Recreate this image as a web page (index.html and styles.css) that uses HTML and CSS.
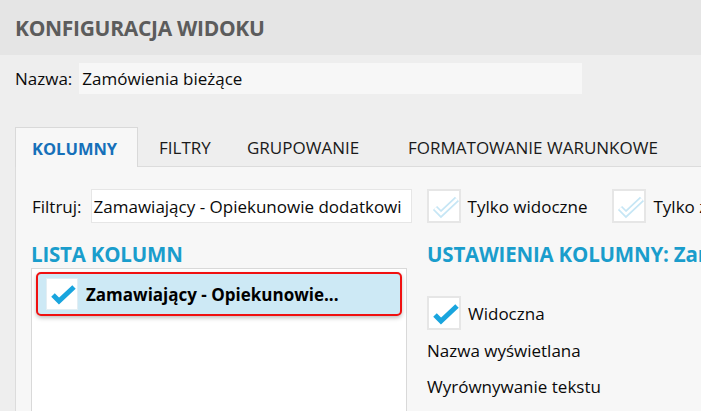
FILE: index.html
```html
<!DOCTYPE html>
<html lang="pl">
<head>
<meta charset="utf-8">
<link rel="stylesheet" href="styles.css">
</head>
<body>
<div class="header"><h1 class="title">KONFIGURACJA WIDOKU</h1></div>
<div class="main">
  <div class="name-row">
    <span class="label">Nazwa:</span>
    <div class="name-input">Zamówienia bieżące</div>
  </div>
  <div class="tabs">
    <div class="tab active t1">KOLUMNY</div>
    <div class="tab t2">FILTRY</div>
    <div class="tab t3">GRUPOWANIE</div>
    <div class="tab t4">FORMATOWANIE WARUNKOWE</div>
    <div class="tab-rest"></div>
  </div>
  <div class="panel">
    <div class="filter-row">
      <span class="label">Filtruj:</span>
      <div class="filter-input">Zamawiający - Opiekunowie dodatkowi</div>
      <div class="check-item">
        <span class="cb"><svg width="30" height="30" viewBox="0 0 30 30"><polyline points="6,17 12,23 28,8" fill="none" stroke="#c6e6f5" stroke-width="6" stroke-linejoin="miter"/><polyline points="6,17 12,23 28,8" fill="none" stroke="#fff" stroke-width="2.5"/></svg></span>
        <span class="cb-text">Tylko widoczne</span>
      </div>
      <div class="check-item">
        <span class="cb"><svg width="30" height="30" viewBox="0 0 30 30"><polyline points="6,17 12,23 28,8" fill="none" stroke="#c6e6f5" stroke-width="6"/><polyline points="6,17 12,23 28,8" fill="none" stroke="#fff" stroke-width="2.5"/></svg></span>
        <span class="cb-text">Tylko zaznaczone</span>
      </div>
    </div>
    <div class="columns">
      <div class="col-left">
        <h2 class="section">LISTA KOLUMN</h2>
        <div class="list">
          <div class="list-item">
            <span class="cb small"><svg width="28" height="28" viewBox="0 0 28 28"><polyline points="5,15 11,21 26,7" fill="none" stroke="#19a5de" stroke-width="5"/></svg></span>
            <span class="item-text">Zamawiający - Opiekunowie...</span>
          </div>
        </div>
      </div>
      <div class="col-right">
        <h2 class="section">USTAWIENIA KOLUMNY: Zamawiający</h2>
        <div class="check-item visible">
          <span class="cb"><svg width="30" height="30" viewBox="0 0 30 30"><polyline points="6,17 12,23 28,8" fill="none" stroke="#19a5de" stroke-width="5"/></svg></span>
          <span class="cb-text">Widoczna</span>
        </div>
        <div class="field">Nazwa wyświetlana</div>
        <div class="field">Wyrównywanie tekstu</div>
      </div>
    </div>
  </div>
</div>
</body>
</html>
```
FILE: styles.css
```css
* { box-sizing: border-box; }
html, body { margin: 0; padding: 0; }
body {
  width: 701px;
  height: 411px;
  overflow: hidden;
  background: #eeeeee;
  font-family: "Open Sans", "Noto Sans", sans-serif;
  color: #0a0a0a;
  font-size: 17px;
}
.header {
  height: 55px;
  background: #e5e5e5;
  display: flex;
  align-items: center;
  padding-left: 15px;
}
.title {
  margin: 0;
  font-size: 21px;
  font-weight: 700;
  color: #5c5c5c;
  letter-spacing: -0.3px;
}
.main { padding: 8px 0 0 15px; }
.name-row { display: flex; align-items: center; height: 31px; }
.label { font-size: 17px; margin-right: 7px; flex: none; }
.name-input {
  width: 503px;
  height: 31px;
  flex: none;
  background: #f7f7f7;
  padding-left: 3px;
  display: flex;
  align-items: center;
  font-size: 17px;
}
.tabs {
  display: flex;
  margin-top: 33px;
  height: 40px;
}
.tab {
  display: flex;
  align-items: center;
  flex: none;
  font-size: 17px;
  color: #1a1a1a;
  border-bottom: 1px solid #dcdcdc;
  padding-top: 1px;
  white-space: nowrap;
}
.tab.active {
  background: #f7f7f7;
  border: 1px solid #d9d9d9;
  border-bottom: none;
  color: #1670b9;
  font-weight: 700;
  font-size: 16.5px;
}
.t1 { width: 123px; padding-left: 16px; }
.t2 { width: 109px; padding-left: 21px; }
.t3 { width: 161px; padding-left: 0; }
.t4 { width: 293px; padding-left: 0; }
.tab-rest { flex: 1; border-bottom: 1px solid #dcdcdc; }
.panel {
  background: #f7f7f7;
  border-left: 1px solid #dcdcdc;
  height: 260px;
  padding: 22px 0 0 16px;
}
.filter-row { display: flex; align-items: center; height: 34px; }
.filter-input {
  width: 321px;
  height: 34px;
  flex: none;
  background: #fff;
  border: 1px solid #e6e6e6;
  padding-left: 2px;
  display: flex;
  align-items: center;
  white-space: nowrap;
  overflow: hidden;
  font-size: 17px;
  margin-left: 2px;
  margin-right: 15px;
}
.check-item { display: flex; align-items: center; margin-right: 25px; white-space: nowrap; flex: none; }
.cb {
  width: 34px;
  height: 34px;
  background: #fff;
  border: 2px solid #e6e6e6;
  display: flex;
  align-items: center;
  justify-content: center;
  flex: none;
}
.cb.small { width: 32px; height: 32px; border: 1px solid #e3eef3; }
.cb-text { margin-left: 7px; font-size: 17px; }
.columns { display: flex; margin-top: 19px; }
.col-left { width: 396px; flex: none; margin-left: -1px; }
.col-right { flex: 1; white-space: nowrap; padding-left: 0; }
.section {
  margin: 0;
  font-size: 20.5px;
  font-weight: 700;
  color: #1a9dcc;
  line-height: 24px;
  letter-spacing: -0.2px;
}
.list {
  margin-top: 2px;
  width: 376px;
  height: 160px;
  background: #fff;
  border: 1px solid #d9d9d9;
  padding: 3px 4px;
}
.list-item {
  height: 44px;
  background: #cde9f5;
  border: 2px solid #f01010;
  border-radius: 5px;
  box-shadow: 0 2px 4px rgba(0,0,0,0.25);
  display: flex;
  align-items: center;
  padding-left: 8px;
}
.item-text { margin-left: 8px; font-weight: 700; font-size: 17px; color: #000; white-space: nowrap; }
.visible { margin-top: 30px; }
.field { margin-top: 8px; font-size: 17px; line-height: 26px; }
.field + .field { margin-top: 10px; }
```
